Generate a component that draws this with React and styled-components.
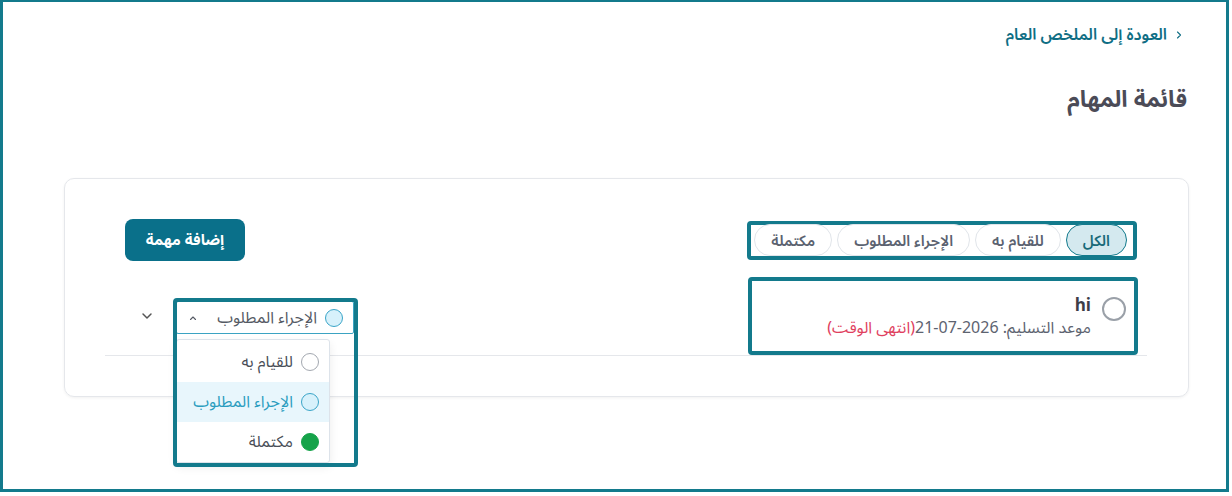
import React from "react";
import styled, { createGlobalStyle } from "styled-components";

const teal = "#137a8c";

const GlobalStyle = createGlobalStyle`
  * { box-sizing: border-box; }
  body {
    margin: 0;
    background: #fff;
    font-family: "Noto Sans Arabic", "Noto Sans", "DejaVu Sans", sans-serif;
  }
`;

const Frame = styled.div`
  direction: rtl;
  width: 1229px;
  height: 492px;
  border: 3px solid ${teal};
  border-top-width: 2px;
  padding: 23px 37px 0 61px;
  overflow: hidden;
`;

const BackLink = styled.a`
  display: flex;
  align-items: center;
  gap: 6px;
  padding-right: 4px;
  height: 20px;
  font-size: 16px;
  font-weight: 600;
  color: #0f6e84;
  text-decoration: none;
  svg { width: 12px; height: 12px; }
`;

const Title = styled.h1`
  margin: 39px 2px 0 0;
  font-size: 23px;
  line-height: 32px;
  font-weight: 700;
  color: #4b4b57;
`;

const Card = styled.section`
  margin-top: 62px;
  border: 1px solid #e5e7eb;
  border-radius: 10px;
  box-shadow: 0 1px 3px rgba(0, 0, 0, 0.06);
  padding: 40px 41px 40px 40px;
`;

const Toolbar = styled.div`
  display: flex;
  align-items: center;
  justify-content: space-between;
  height: 42px;
`;

const Highlight = styled.div`
  border: 4px solid ${teal};
  border-radius: 4px;
`;

const Filters = styled(Highlight)`
  display: flex;
  align-items: center;
  gap: 5px;
  height: 39px;
  margin-right: 10px;
  padding: 0 6px 0 3px;
`;

const Pill = styled.button`
  height: 32px;
  padding: 0 16px;
  border-radius: 16px;
  border: 1px solid ${(p) => (p.$active ? teal : "#e1e5ea")};
  background: ${(p) => (p.$active ? "#d4e9ef" : "#fff")};
  color: ${(p) => (p.$active ? "#186a79" : "#5b6270")};
  font-family: inherit;
  font-size: 15px;
  font-weight: 600;
  cursor: pointer;
`;

const AddButton = styled.button`
  margin-left: 20px;
  width: 120px;
  height: 42px;
  border: none;
  border-radius: 8px;
  background: #0a708a;
  color: #fff;
  font-family: inherit;
  font-size: 15px;
  font-weight: 700;
  cursor: pointer;
`;

const TaskRow = styled.div`
  margin-top: 16px;
  display: flex;
  align-items: center;
  justify-content: space-between;
  border-bottom: 1px solid #e5e7eb;
`;

const TaskInfo = styled(Highlight)`
  width: 390px;
  height: 78px;
  margin-right: 9px;
  display: flex;
  align-items: flex-start;
  gap: 11px;
  padding: 16px 8px 0;
`;

const TaskCheck = styled.span`
  flex: none;
  width: 24px;
  height: 24px;
  border: 2px solid #9aa0a8;
  border-radius: 50%;
`;

const TaskText = styled.div`
  display: flex;
  flex-direction: column;
  gap: 3px;
`;

const TaskName = styled.div`
  font-size: 17px;
  font-weight: 700;
  color: #3d3d47;
  line-height: 18px;
`;

const DueDate = styled.div`
  font-size: 16px;
  color: #5d6370;
  line-height: 20px;
`;

const Overdue = styled.span`
  color: #e0405e;
`;

const Controls = styled.div`
  display: flex;
  align-items: center;
  gap: 18px;
  margin-left: 34px;
`;

const SelectWrap = styled.div`
  position: relative;
  padding: 3px 4px 0 3px;

  &::after {
    content: "";
    position: absolute;
    top: 0;
    left: 0;
    right: 0;
    height: 161px;
    border: 4px solid ${teal};
    border-radius: 4px;
    pointer-events: none;
    z-index: 2;
  }
`;

const Select = styled.div`
  width: 178px;
  height: 33px;
  display: flex;
  align-items: center;
  gap: 8px;
  padding: 0 10px 0 10px;
  border: 1px solid #3ba3c2;
  border-radius: 2px;
  font-size: 16px;
  color: #555a64;
  svg { margin-right: auto; width: 12px; height: 12px; }
`;

const Menu = styled.ul`
  position: absolute;
  top: 41px;
  right: 28px;
  width: 154px;
  margin: 0;
  padding: 2px 0 0;
  list-style: none;
  background: #fff;
  border: 1px solid #dde3ea;
  border-radius: 3px;
  box-shadow: 0 4px 10px rgba(0, 0, 0, 0.08);
  z-index: 1;
`;

const MenuItem = styled.li`
  height: 40px;
  display: flex;
  align-items: center;
  gap: 8px;
  padding: 0 10px;
  font-size: 16px;
  background: ${(p) => (p.$selected ? "#e8f6fc" : "transparent")};
  color: ${(p) => (p.$selected ? "#2b9dbf" : "#4a4f58")};
`;

const statusDot = {
  todo: { bg: "#fff", border: "#a3a8b0" },
  action: { bg: "#d7f1fb", border: "#3aa5c8" },
  done: { bg: "#16a34a", border: "#16a34a" },
};

const Dot = styled.span`
  flex: none;
  width: 18px;
  height: 18px;
  border-radius: 50%;
  background: ${(p) => statusDot[p.$status].bg};
  border: 1px solid ${(p) => statusDot[p.$status].border};
`;

const Expand = styled.button`
  border: none;
  background: none;
  padding: 0;
  color: #555;
  display: flex;
  cursor: pointer;
  svg { width: 16px; height: 16px; }
`;

const Chevron = ({ d }) => (
  <svg viewBox="0 0 24 24" fill="none" stroke="currentColor" strokeWidth="2.2" strokeLinecap="round" strokeLinejoin="round">
    <path d={d} />
  </svg>
);

const filters = [
  { label: "الكل", active: true },
  { label: "للقيام به" },
  { label: "الإجراء المطلوب" },
  { label: "مكتملة" },
];

const statuses = [
  { key: "todo", label: "للقيام به" },
  { key: "action", label: "الإجراء المطلوب" },
  { key: "done", label: "مكتملة" },
];

export default function App() {
  return (
    <>
      <GlobalStyle />
      <Frame>
        <BackLink href="#">
          <Chevron d="M9 6l6 6-6 6" />
          العودة إلى الملخص العام
        </BackLink>
        <Title>قائمة المهام</Title>

        <Card>
          <Toolbar>
            <Filters>
              {filters.map((f) => (
                <Pill key={f.label} $active={f.active}>
                  {f.label}
                </Pill>
              ))}
            </Filters>
            <AddButton>إضافة مهمة</AddButton>
          </Toolbar>

          <TaskRow>
            <TaskInfo>
              <TaskCheck />
              <TaskText>
                <TaskName>hi</TaskName>
                <DueDate>
                  موعد التسليم: 2026-07-21<Overdue>(انتهى الوقت)</Overdue>
                </DueDate>
              </TaskText>
            </TaskInfo>

            <Controls>
              <SelectWrap>
                <Select>
                  <Dot $status="action" />
                  الإجراء المطلوب
                  <Chevron d="M7 15l5-5 5 5" />
                </Select>
                <Menu>
                  {statuses.map((s) => (
                    <MenuItem key={s.key} $selected={s.key === "action"}>
                      <Dot $status={s.key} />
                      {s.label}
                    </MenuItem>
                  ))}
                </Menu>
              </SelectWrap>
              <Expand>
                <Chevron d="M6 9l6 6 6-6" />
              </Expand>
            </Controls>
          </TaskRow>
        </Card>
      </Frame>
    </>
  );
}
